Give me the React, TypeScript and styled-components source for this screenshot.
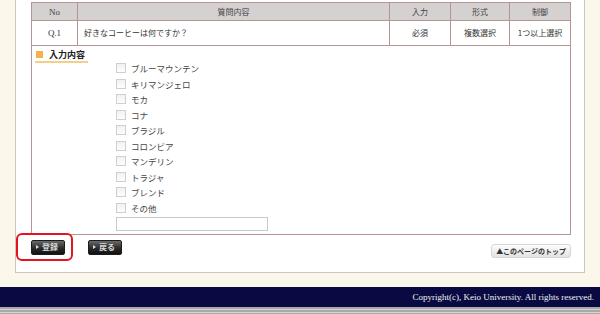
import styled, {createGlobalStyle} from "styled-components";

const GlobalStyle = createGlobalStyle`
    html, body {
        margin: 0;
        padding: 0;
        background: #fcf7eb;
    }
    body {
        font-family: "Noto Sans CJK JP", "Liberation Sans", sans-serif;
        color: #333;
    }
`;

const Page = styled.div`
    width: 600px;
    height: 314px;
    display: flex;
    flex-direction: column;
    overflow: hidden;
`;

const Main = styled.main`
    padding: 0 15px 0 15px;
`;

const Panel = styled.section`
    background: #fff;
    border: 1px solid #cbc6c0;
    border-top: none;
    padding: 2px 13px 14px 15px;
    display: flex;
    flex-direction: column;
`;

const QuestionBox = styled.div`
    border: 1px solid #b99494;
    border-top: none;
    padding-bottom: 3px;
`;

const Table = styled.table`
    width: 100%;
    border-collapse: collapse;
    table-layout: fixed;
    font-size: 8px;
    line-height: 10px;
`;

const Th = styled.th<{$w?: number}>`
    width: ${({$w}) => ($w ? `${$w}px` : "auto")};
    height: 17px;
    padding: 0;
    background: #d5d1d1;
    border: 1px solid #b99494;
    font-weight: normal;
    color: #444;
    text-align: center;
    &:first-child { border-left: none; }
    &:last-child { border-right: none; }
`;

const Td = styled.td<{$left?: boolean}>`
    height: 24px;
    padding: 0 ${({$left}) => ($left ? "6px" : "0")};
    border: 1px solid #b99494;
    text-align: ${({$left}) => ($left ? "left" : "center")};
    color: #333;
    &:first-child { border-left: none; }
    &:last-child { border-right: none; }
`;

const SerifText = styled.span`
    font-family: "Liberation Serif", serif;
    font-size: 9px;
`;

const SectionTitle = styled.h3`
    display: flex;
    width: fit-content;
    align-items: center;
    gap: 6px;
    margin: 3px 0 0 3px;
    padding: 0 3px 1px 1px;
    font-size: 9px;
    font-weight: bold;
    color: #222;
    border-bottom: 2px solid #f3cf8a;
    line-height: 11px;
`;

const Square = styled.span`
    width: 7px;
    height: 7px;
    background: #f5b24a;
`;

const OptionList = styled.ul`
    list-style: none;
    margin: 0 0 0 84px;
    padding: 0;
    display: flex;
    flex-direction: column;
    gap: 5.5px;
`;

const Option = styled.li`
    display: flex;
    align-items: center;
    gap: 5px;
    height: 10px;
    line-height: 10px;
    font-size: 8.5px;
    color: #444;
`;

const Check = styled.span`
    width: 8px;
    height: 8px;
    border: 1px solid #cfcfcf;
    background: linear-gradient(#f2f2f2, #fdfdfd);
`;

const OtherInput = styled.input`
    display: block;
    margin: 4px 0 0 84px;
    width: 152px;
    height: 14px;
    box-sizing: border-box;
    border: 1px solid #c9c9c9;
    padding: 0 3px;
`;

const ButtonRow = styled.div`
    display: flex;
    align-items: flex-start;
    margin-top: 5px;
`;

const Highlight = styled.span`
    position: relative;
    display: inline-flex;
    &::after {
        content: "";
        position: absolute;
        left: -15px;
        top: -7px;
        right: -8px;
        bottom: -6px;
        border: 2px solid #e3141c;
        border-radius: 6px;
    }
`;

const DarkButton = styled.button<{$gap?: number}>`
    margin-left: ${({$gap}) => $gap ?? 0}px;
    width: 34px;
    height: 15px;
    padding: 0 0 0 4px;
    display: inline-flex;
    align-items: center;
    gap: 3px;
    border: 1px solid #1c1c1c;
    border-radius: 2px;
    background: linear-gradient(#6a6a6a, #2b2b2b 55%, #111);
    color: #d8d8d8;
    font-family: "Noto Sans CJK JP", sans-serif;
    font-size: 8px;
    font-weight: bold;
    line-height: 1;
    box-sizing: border-box;
`;

const Arrow = styled.span`
    width: 0;
    height: 0;
    border-top: 2.5px solid transparent;
    border-bottom: 2.5px solid transparent;
    border-left: 3px solid #ddd;
`;

const TopButton = styled.a`
    margin-left: auto;
    margin-top: 4px;
    height: 14px;
    padding: 0 4px;
    display: inline-flex;
    align-items: center;
    border: 1px solid #d6d6d6;
    border-radius: 3px;
    background: linear-gradient(#fdfdfd, #e2e2e2);
    color: #333;
    font-size: 7px;
    font-weight: bold;
    text-decoration: none;
    box-sizing: border-box;
`;

const Footer = styled.footer`
    margin-top: 14px;
    height: 20px;
    flex-shrink: 0;
    background: #0a0a42;
    display: flex;
    align-items: center;
    justify-content: flex-end;
    padding-right: 6px;
`;

const Copyright = styled.p`
    margin: 0;
    font-family: "Liberation Serif", serif;
    font-size: 9px;
    color: #f2f2f2;
`;

const Stripes = styled.div`
    flex: 1;
    min-height: 7px;
    background: repeating-linear-gradient(#a9a9a9 0 2px, #d4d4d4 2px 3px);
`;

const options = [
    "ブルーマウンテン",
    "キリマンジェロ",
    "モカ",
    "コナ",
    "ブラジル",
    "コロンビア",
    "マンデリン",
    "トラジャ",
    "ブレンド",
    "その他",
];

export default function App() {
    return (
        <>
            <GlobalStyle />
            <Page>
                <Main>
                    <Panel>
                        <QuestionBox>
                            <Table>
                                <thead>
                                    <tr>
                                        <Th $w={45}><SerifText>No</SerifText></Th>
                                        <Th>質問内容</Th>
                                        <Th $w={60}>入力</Th>
                                        <Th $w={58}>形式</Th>
                                        <Th $w={60}>制御</Th>
                                    </tr>
                                </thead>
                                <tbody>
                                    <tr>
                                        <Td><SerifText>Q.1</SerifText></Td>
                                        <Td $left>好きなコーヒーは何ですか？</Td>
                                        <Td>必須</Td>
                                        <Td>複数選択</Td>
                                        <Td>1つ以上選択</Td>
                                    </tr>
                                </tbody>
                            </Table>
                            <SectionTitle>
                                <Square />
                                入力内容
                            </SectionTitle>
                            <OptionList>
                                {options.map((o) => (
                                    <Option key={o}>
                                        <Check />
                                        {o}
                                    </Option>
                                ))}
                            </OptionList>
                            <OtherInput type="text" />
                        </QuestionBox>
                        <ButtonRow>
                            <Highlight>
                                <DarkButton>
                                    <Arrow />
                                    登録
                                </DarkButton>
                            </Highlight>
                            <DarkButton $gap={23}>
                                <Arrow />
                                戻る
                            </DarkButton>
                            <TopButton href="#">▲このページのトップ</TopButton>
                        </ButtonRow>
                    </Panel>
                </Main>
                <Footer>
                    <Copyright>Copyright(c), Keio University. All rights reserved.</Copyright>
                </Footer>
                <Stripes />
            </Page>
        </>
    );
}
